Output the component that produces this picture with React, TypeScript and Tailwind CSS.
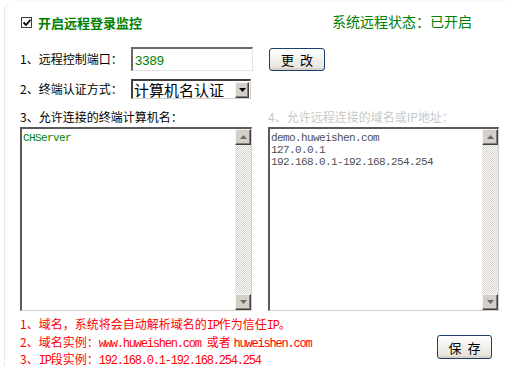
import React from "react";

const CJK = "font-['Noto_Sans_CJK_SC',sans-serif]";
const MONO = "font-['Liberation_Mono',monospace] tracking-[-1.2px]";
const MONO_SM = "font-['Liberation_Mono',monospace] text-[11px] tracking-[-0.6px] leading-[12px]";

function Arrow({ up }: { up?: boolean }) {
  return (
    <div className="flex h-[16px] w-[16px] shrink-0 items-center justify-center border border-t-[#f4f4f4] border-l-[#f4f4f4] border-r-[#404040] border-b-[#404040] bg-[#d4d0c8] shadow-[inset_-1px_-1px_0_#808080]">
      <svg width="7" height="4" viewBox="0 0 7 4">
        {up ? (
          <path d="M3.5 0 L7 4 L0 4 Z" fill="#6a6a6a" />
        ) : (
          <path d="M0 0 L7 0 L3.5 4 Z" fill="#6a6a6a" />
        )}
      </svg>
    </div>
  );
}

function ScrollBar() {
  return (
    <div className="flex h-full w-[16px] shrink-0 flex-col">
      <Arrow up />
      <div className="flex-1 bg-[repeating-conic-gradient(#d4d0c8_0%_25%,#ffffff_0%_50%)] bg-[length:2px_2px]" />
      <Arrow />
    </div>
  );
}

function Box({ className, children }: { className: string; children: React.ReactNode }) {
  return (
    <div
      className={
        "flex h-[184px] border-t-2 border-l-2 border-r border-b border-t-[#5a5a5a] border-l-[#5a5a5a] border-r-[#d4d0c8] border-b-[#d4d0c8] bg-white " +
        className
      }
    >
      <div className="flex-1 pl-[1px] pt-[3px]">{children}</div>
      <ScrollBar />
    </div>
  );
}

function XPButton({ className, children }: { className: string; children: React.ReactNode }) {
  return (
    <button
      className={
        "flex items-center justify-center rounded-[3px] border border-[#1c3f6e] bg-linear-to-b from-white to-[#e4e2d8] text-[13px] leading-none text-black shadow-[inset_0_-2px_0_#d8d3c6] " +
        CJK +
        " " +
        className
      }
    >
      {children}
    </button>
  );
}

export default function App() {
  return (
    <div className={"h-[370px] w-[507px] overflow-hidden bg-white text-[12px] text-black " + CJK}>
      <div className="ml-[4px] h-[366px] rounded-tl-[12px] border-l border-t border-dotted border-l-[#c6d0ee] border-t-[#f0f2fa] pl-[15px]">
        {/* top row */}
        <div className="mt-[9px] flex h-[24px] items-center pr-[35px]">
          <div className="ml-[1px] flex h-[11px] w-[11px] items-center justify-center border border-[#3a3a3a] bg-white">
            <svg width="8" height="7" viewBox="0 0 8 7">
              <path d="M0.5 3.5 L3 6 L7.5 0.8" stroke="#000" strokeWidth="1.8" fill="none" />
            </svg>
          </div>
          <span className="ml-[6px] text-[13px] font-bold leading-none text-[#008000]">开启远程登录监控</span>
          <span className="ml-auto -mt-[3px] text-[14px] leading-none text-[#008000]">系统远程状态：已开启</span>
        </div>

        {/* row 1 */}
        <div className="mt-[13px] flex h-[24px] items-center">
          <span className="w-[111px] leading-none">1、远程控制端口：</span>
          <div className="h-[24px] w-[122px] border-t-2 border-l-2 border-r border-b border-t-[#6a6a6a] border-l-[#6a6a6a] border-r-[#e4e4e4] border-b-[#e4e4e4] bg-white pl-[2px] pt-[2px]">
            <span className="font-['Liberation_Sans',sans-serif] text-[13px] leading-[14px] text-[#008000]">3389</span>
          </div>
          <XPButton className="ml-[16px] h-[23px] w-[56px]">
            <span>更</span>
            <span className="ml-[6px]">改</span>
          </XPButton>
        </div>

        {/* row 2 */}
        <div className="mt-[8px] flex h-[20px] items-center">
          <span className="w-[111px] leading-none">2、终端认证方式：</span>
          <div className="flex h-[20px] w-[120px] items-center border-t-2 border-l-2 border-r border-b border-t-[#404040] border-l-[#404040] border-r-[#d4d0c8] border-b-[#d4d0c8] bg-white">
            <span className="flex-1 pl-[1px] text-[15px] leading-none">计算机名认证</span>
            <div className="mr-[1px] flex h-[16px] w-[14px] items-center justify-center border border-t-[#f4f4f4] border-l-[#f4f4f4] border-r-[#404040] border-b-[#404040] bg-[#d4d0c8] shadow-[inset_-1px_-1px_0_#808080]">
              <svg width="7" height="4" viewBox="0 0 7 4">
                <path d="M0 0 L7 0 L3.5 4 Z" fill="#000" />
              </svg>
            </div>
          </div>
        </div>

        {/* labels */}
        <div className="mt-[10px] flex h-[16px] items-center">
          <span className="w-[248px] leading-none">3、允许连接的终端计算机名：</span>
          <span className="leading-none text-[#c8c8c8]">4、允许远程连接的域名或IP地址：</span>
        </div>

        {/* text areas */}
        <div className="mt-[2px] flex gap-[16px]">
          <Box className="w-[232px]">
            <div className={MONO_SM + " text-[#008000]"}>CHServer</div>
          </Box>
          <Box className="w-[231px]">
            <div className={MONO_SM + " text-[#505050]"}>
              <div>demo.huweishen.com</div>
              <div>127.0.0.1</div>
              <div>192.168.0.1-192.168.254.254</div>
            </div>
          </Box>
        </div>

        {/* notes */}
        <div className="mt-[5px] flex items-start">
          <div className="w-[417px] text-[12px] leading-[16px] text-[#ff0000]">
            <div>
              1、域名，系统将会自动解析域名的<span className={MONO}>IP</span>作为信任<span className={MONO}>IP</span>。
            </div>
            <div>
              2、域名实例：<span className={MONO}>www.huweishen.com </span>或者 <span className={MONO}>huweishen.com</span>
            </div>
            <div className="-mt-[1px]">
              3、<span className={MONO}>IP</span>段实例：<span className={MONO}>192.168.0.1-192.168.254.254</span>
            </div>
          </div>
          <XPButton className="mt-[19px] h-[24px] w-[55px]">
            <span>保</span>
            <span className="ml-[6px]">存</span>
          </XPButton>
        </div>
      </div>
    </div>
  );
}
